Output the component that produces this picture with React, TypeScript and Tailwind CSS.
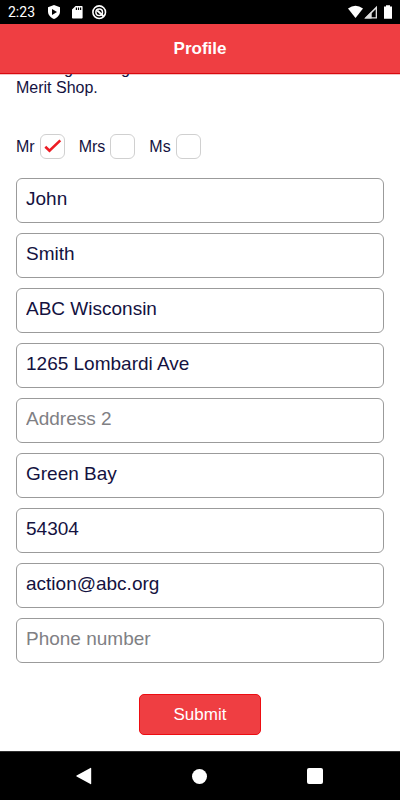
import React from "react";

const titles = ["Mr", "Mrs", "Ms"];

const fields = [
  { label: "First name", value: "John", type: "text" },
  { label: "Last name", value: "Smith", type: "text" },
  { label: "Company", value: "ABC Wisconsin", type: "text" },
  { label: "Address 1", value: "1265 Lombardi Ave", type: "text" },
  { label: "Address 2", value: "", type: "text" },
  { label: "City", value: "Green Bay", type: "text" },
  { label: "Zip code", value: "54304", type: "text" },
  { label: "Email", value: "action@abc.org", type: "email" },
  { label: "Phone number", value: "", type: "tel" },
];

function StatusBar() {
  return (
    <div className="flex h-6 shrink-0 items-center justify-between bg-black px-2 text-white">
      <div className="flex items-center">
        <span className="w-10 font-['Roboto',sans-serif] text-sm leading-6">2:23</span>
        <svg className="h-4 w-3" viewBox="0 0 12 16" aria-hidden="true">
          <path fill="#fff" d="M6 1 12 3.2V7.5C12 11 9.4 13.7 6 15 2.6 13.7 0 11 0 7.5V3.2Z" />
          <path fill="#000" d="M4 5v6L9 8Z" />
        </svg>
        <svg className="ml-3 h-4 w-3" viewBox="0 0 12 16" aria-hidden="true">
          <path fill="#fff" fillRule="evenodd" d="M3.6 2h6.2Q10.6 2 10.6 2.8v11Q10.6 14.6 9.8 14.6h-9Q0 14.6 0 13.8V5.6ZM3.8 3.5v2.4h1.2V3.5ZM5.9 3.5v2.4h1.2V3.5ZM8 3.5v2.4h1.2V3.5Z" />
        </svg>
        <svg className="ml-[7px] h-4 w-4" viewBox="0 0 16 16" fill="none" stroke="#fff" aria-hidden="true">
          <circle cx="8.2" cy="8.2" r="6.3" strokeWidth="1.6" />
          <circle cx="8.2" cy="8.2" r="3.3" strokeWidth="1.5" />
          <path d="m6.3 6.5 6.2 5.8" strokeWidth="1.9" />
        </svg>
      </div>
      <div className="flex items-center">
        <svg className="h-4 w-4" viewBox="0 0 16 16" aria-hidden="true">
          <path fill="#fff" d="M0 4.6Q7.5-1 15 4.6L7.5 14Z" />
        </svg>
        <svg className="h-4 w-4" viewBox="0 0 16 16" aria-hidden="true">
          <path fill="#ddd" fillRule="evenodd" d="M13 1.7v12.8H.2ZM11.7 5.2 7.2 9.8V13.3h4.5Z" />
          <path fill="#ddd" d="m7.6 7.4v7H.6Z" />
        </svg>
        <svg className="ml-1 h-4 w-2" viewBox="0 0 8 16" aria-hidden="true">
          <path fill="#fff" d="M2 1.2h4v1.3h2v12.2H0V2.5h2Z" />
        </svg>
      </div>
    </div>
  );
}

function NavigationBar() {
  return (
    <nav className="flex h-[49px] shrink-0 items-center justify-around border-t border-[#303030] bg-black px-[27px]">
      <button type="button" aria-label="Back" className="flex size-6 items-center justify-center">
        <svg className="size-5" viewBox="0 0 20 20" aria-hidden="true">
          <path fill="#fff" d="M16.2 2.2v15.6q0 .8-.8.3L1.6 10.5q-.8-.5 0-1L15.4 1.9q.8-.5.8.3Z" />
        </svg>
      </button>
      <button type="button" aria-label="Home" className="flex size-6 items-center justify-center">
        <span className="size-[15px] rounded-full bg-white" />
      </button>
      <button type="button" aria-label="Recent apps" className="flex size-6 items-center justify-center">
        <span className="size-4 rounded-xs bg-white" />
      </button>
    </nav>
  );
}

export default function App() {
  return (
    <div className="flex h-screen flex-col bg-white font-['Liberation_Sans',Arial,sans-serif] text-[#14123f]">
      <StatusBar />
      <header className="flex h-[50px] shrink-0 items-center justify-center border-b border-[#d80a0f] bg-[#ef3e42] shadow-[0_1px_0_#f3c4c5]">
        <h1 className="text-[17px] leading-6 font-bold text-white">Profile</h1>
      </header>
      <main className="flex min-h-0 flex-1 flex-col justify-end overflow-hidden px-4 pb-4">
        <p className="text-base leading-[19px]">
          Building and legal
          <br />
          Merit Shop.
        </p>
        <form onSubmit={(e) => e.preventDefault()}>
          <fieldset aria-label="Title" className="mt-[37px] flex gap-3.5">
            {titles.map((title) => (
              <label key={title} className="flex items-center gap-[5px] text-base leading-6">
                {title}
                <span className="grid">
                  <input
                    type="checkbox"
                    defaultChecked={title === "Mr"}
                    className="peer col-start-1 row-start-1 size-[25px] appearance-none rounded-md border border-[#d0d0d0] bg-white"
                  />
                  <svg
                    className="pointer-events-none invisible col-start-1 row-start-1 size-[25px] peer-checked:visible"
                    viewBox="0 0 25 25"
                    fill="none"
                    stroke="#ed1c24"
                    strokeWidth="2.6"
                    aria-hidden="true"
                  >
                    <path d="m5.3 12.8 4.2 4L20.3 6.4" />
                  </svg>
                </span>
              </label>
            ))}
          </fieldset>
          <div className="mt-[19px] flex flex-col gap-2.5">
            {fields.map((field) => (
              <input
                key={field.label}
                type={field.type}
                aria-label={field.label}
                placeholder={field.label}
                defaultValue={field.value}
                className="h-[45px] w-full rounded-md border border-[#9b9b9b] px-[9px] pb-[3px] text-[19px] leading-6 placeholder:text-[#808084]"
              />
            ))}
          </div>
          <div className="mt-[31px] flex justify-center">
            <button
              type="submit"
              className="h-[41px] w-[122px] rounded-[5px] border border-[#ed0d12] bg-[#ef3e42] text-[17px] text-white"
            >
              Submit
            </button>
          </div>
        </form>
      </main>
      <NavigationBar />
    </div>
  );
}
